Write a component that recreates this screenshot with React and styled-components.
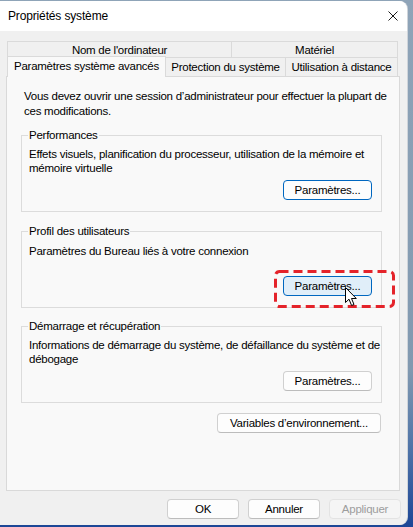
import React from 'react';
import styled, { createGlobalStyle } from 'styled-components';

const GlobalStyle = createGlobalStyle`
  html, body {
    margin: 0;
    padding: 0;
    height: 100%;
  }
  body {
    overflow: hidden;
    background: linear-gradient(to bottom, #8fa4b8 0%, #8199b0 70%, #4f74a8 85%, #1c4696 100%);
    font-family: 'Liberation Sans', Arial, sans-serif;
    font-size: 11.5px;
    letter-spacing: -0.25px;
    color: #000;
  }
`;

const Window = styled.div`
  width: 407px;
  height: 524px;
  margin-top: 1px;
  background: #f0f0f0;
  border-radius: 0 8px 8px 0;
  overflow: hidden;
  display: flex;
  flex-direction: column;
  box-shadow: 1px 0 0 #cfd4da;
`;

const TitleBar = styled.div`
  height: 30px;
  flex-shrink: 0;
  background: #fff;
  display: flex;
  align-items: center;
  justify-content: space-between;
  padding: 0 9px 0 8px;
`;

const Title = styled.span`
  font-size: 12px;
  letter-spacing: -0.15px;
`;

const CloseButton = styled.button`
  border: 0;
  background: none;
  padding: 0;
  width: 10px;
  height: 10px;
  display: flex;
  align-items: center;
  justify-content: center;
`;

const TabStrip = styled.div`
  margin-top: 10px;
  padding: 0 9px 0 7px;
  display: flex;
  flex-direction: column;
`;

const TabRow = styled.div`
  display: flex;
  align-items: flex-end;
  height: ${(p) => p.$h}px;
`;

const Tab = styled.div`
  box-sizing: border-box;
  width: ${(p) => p.$w}px;
  height: ${(p) => (p.$active ? 21 : p.$h)}px;
  margin-bottom: ${(p) => (p.$active ? -1 : 0)}px;
  border: 1px solid #dadada;
  border-bottom: 0;
  margin-right: -1px;
  background: ${(p) => (p.$active ? '#f9f9f9' : '#f0f0f0')};
  position: relative;
  z-index: ${(p) => (p.$active ? 2 : 1)};
  display: flex;
  align-items: center;
  justify-content: center;
  padding-bottom: ${(p) => (p.$active ? 2 : 0)}px;
  white-space: nowrap;
`;

const Panel = styled.div`
  box-sizing: border-box;
  height: 415px;
  margin: 0 7px 0 6px;
  border: 1px solid #d9d9d9;
  background: #f9f9f9;
  display: flex;
  flex-direction: column;
`;

const Intro = styled.p`
  margin: 12px 12px 0 17px;
  line-height: 15px;
`;

const Group = styled.fieldset`
  box-sizing: border-box;
  height: 84px;
  margin: ${(p) => p.$top}px 17px 0 14px;
  padding: 0 9px 11px 7px;
  border: 1px solid #dcdcdc;
  min-width: 0;
`;

const Legend = styled.legend`
  padding: 0 1px;
  margin-left: -1px;
  line-height: 14px;
`;

const GroupBody = styled.div`
  height: 58px;
  display: flex;
  flex-direction: column;
  justify-content: space-between;
`;

const GroupText = styled.p`
  margin: ${(p) => p.$gap}px -8px 0 0;
  line-height: 14px;
`;

const ButtonSlot = styled.div`
  align-self: flex-end;
  position: relative;
`;

const Button = styled.button`
  box-sizing: border-box;
  width: ${(p) => p.$w || 89}px;
  height: 20px;
  padding: 0;
  font-family: inherit;
  font-size: inherit;
  letter-spacing: inherit;
  line-height: 18px;
  color: ${(p) => (p.$disabled ? '#9d9d9d' : '#000')};
  background: ${(p) => (p.$hover ? '#e0eef9' : p.$disabled ? '#f5f5f5' : '#fdfdfd')};
  border: 1px solid ${(p) => (p.$focus || p.$hover ? '#0067c0' : p.$disabled ? '#e3e3e3' : '#d0d0d0')};
  border-bottom-color: ${(p) => (p.$focus || p.$hover ? '#0067c0' : p.$disabled ? '#e3e3e3' : '#bcbcbc')};
  border-radius: 4px;
`;

const EnvRow = styled.div`
  margin: 10px 18px 0 0;
  display: flex;
  justify-content: flex-end;
`;

const Footer = styled.div`
  display: flex;
  justify-content: flex-end;
  gap: 9px;
  padding: 8px 6px 0 0;
`;

const Highlight = styled.svg`
  position: absolute;
  left: -9px;
  top: -6px;
  overflow: visible;
  pointer-events: none;
`;

const Cursor = styled.svg`
  position: absolute;
  left: 62px;
  top: 11px;
  pointer-events: none;
`;

const tabs1 = [
  { label: "Nom de l'ordinateur", w: 225 },
  { label: 'Matériel', w: 167 },
];

const tabs2 = [
  { label: 'Paramètres système avancés', w: 159, active: true },
  { label: 'Protection du système', w: 121 },
  { label: 'Utilisation à distance', w: 113 },
];

export default function App() {
  return (
    <>
      <GlobalStyle />
      <Window>
        <TitleBar>
          <Title>Propriétés système</Title>
          <CloseButton aria-label="Fermer">
            <svg width="10" height="10" viewBox="0 0 10 10">
              <path d="M0.5 0.5 L9.5 9.5 M9.5 0.5 L0.5 9.5" stroke="#1a1a1a" strokeWidth="1" />
            </svg>
          </CloseButton>
        </TitleBar>

        <TabStrip>
          <TabRow $h={16}>
            {tabs1.map((t) => (
              <Tab key={t.label} $w={t.w} $h={16}>{t.label}</Tab>
            ))}
          </TabRow>
          <TabRow $h={19}>
            {tabs2.map((t) => (
              <Tab key={t.label} $w={t.w} $h={19} $active={t.active}>{t.label}</Tab>
            ))}
          </TabRow>
        </TabStrip>

        <Panel>
          <Intro>
            Vous devez ouvrir une session d’administrateur pour effectuer la plupart de ces modifications.
          </Intro>

          <Group $top={9}>
            <Legend>Performances</Legend>
            <GroupBody>
              <GroupText $gap={5}>
                Effets visuels, planification du processeur, utilisation de la mémoire et mémoire virtuelle
              </GroupText>
              <ButtonSlot>
                <Button $focus>Paramètres...</Button>
              </ButtonSlot>
            </GroupBody>
          </Group>

          <Group $top={12}>
            <Legend>Profil des utilisateurs</Legend>
            <GroupBody>
              <GroupText $gap={6}>Paramètres du Bureau liés à votre connexion</GroupText>
              <ButtonSlot>
                <Button $hover>Paramètres...</Button>
                <Highlight width="121" height="38">
                  <rect x="1.5" y="1.5" width="118" height="35" rx="4" fill="none" stroke="#e4232a" strokeWidth="3" strokeDasharray="9 5" />
                </Highlight>
                <Cursor width="13" height="20" viewBox="0 0 13 20">
                  <path d="M0.5 0.5 L0.5 15.5 L4 12.2 L6.6 18.5 L9 17.5 L6.5 11.5 L11.3 11.5 Z" fill="#fff" stroke="#000" strokeWidth="1" strokeLinejoin="round" />
                </Cursor>
              </ButtonSlot>
            </GroupBody>
          </Group>

          <Group $top={11}>
            <Legend>Démarrage et récupération</Legend>
            <GroupBody>
              <GroupText $gap={5}>
                Informations de démarrage du système, de défaillance du système et de débogage
              </GroupText>
              <ButtonSlot>
                <Button>Paramètres...</Button>
              </ButtonSlot>
            </GroupBody>
          </Group>

          <EnvRow>
            <Button $w={164}>Variables d’environnement...</Button>
          </EnvRow>
        </Panel>

        <Footer>
          <Button $w={72}>OK</Button>
          <Button $w={72}>Annuler</Button>
          <Button $w={72} $disabled>Appliquer</Button>
        </Footer>
      </Window>
    </>
  );
}
